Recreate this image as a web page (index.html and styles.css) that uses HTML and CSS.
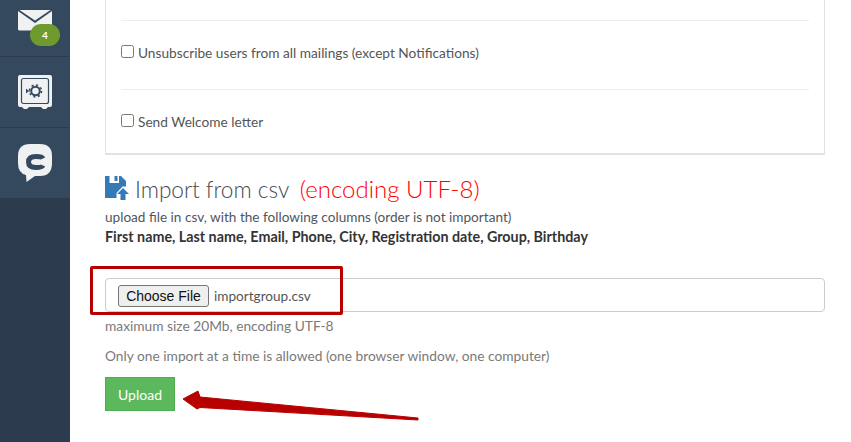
FILE: index.html
```html
<!DOCTYPE html>
<html lang="en">
<head>
    <meta charset="UTF-8">
    <meta name="viewport" content="width=device-width, initial-scale=1.0">
    <title>Import from csv</title>
    <link rel="stylesheet" href="styles.css">
</head>
<body>
    <div class="layout">
        <aside class="sidebar">
            <div class="side-item side-mail">
                <svg class="icon-mail" width="34" height="21" viewBox="0 0 34 21">
                    <path d="M0 1 L17 13 L34 1 V19 Q34 20.500 32.500 20.500 H1.500 Q0 20.500 0 19 Z" fill="#eff1f2"/>
                    <path d="M1.500 0 H32.500 L17 10.500 Z" fill="#eff1f2"/>
                </svg>
                <span class="badge">4</span>
            </div>
            <div class="side-item">
                <svg width="34" height="34" viewBox="0 0 34 34">
                    <path d="M2 0 H32 Q34 0 34 2 V30 Q34 32 32 32 H30 L28 34 H25 L23 32 H11 L9 34 H6 L4 32 H2 Q0 32 0 30 V2 Q0 0 2 0 Z" fill="#eff1f2"/>
                    <rect x="3.500" y="3.500" width="27" height="25" rx="2" fill="none" stroke="#34495e" stroke-width="1.200"/>
                    <circle cx="17.500" cy="16" r="4.300" fill="none" stroke="#34495e" stroke-width="2"/>
                    <circle cx="17.500" cy="16" r="6" fill="none" stroke="#34495e" stroke-width="1.600" stroke-dasharray="2 2.700"/>
                    <path d="M8 13.500 L11 16 L8 18.500 Z M8 15.500 H12 V16.500 H8 Z" fill="#34495e"/>
                </svg>
            </div>
            <div class="side-item">
                <svg width="34" height="38" viewBox="0 0 34 38">
                    <path d="M12 0 H22 Q34 0 34 12 V19 Q34 32 22 32 H17 L8.500 38 L8 31 Q0 29 0 19 V12 Q0 0 12 0 Z" fill="#eff1f2"/>
                    <path d="M25 14.500 Q24 12.500 18 12.500 Q10.500 12.500 10.500 18 Q10.500 23.500 18 23.500 Q24 23.500 25 21.500" fill="none" stroke="#34495e" stroke-width="5"/>
                </svg>
            </div>
        </aside>
        <main class="content">
            <section class="panel">
                <div class="panel-row">
                    <label class="check"><input type="checkbox"> Unsubscribe users from all mailings (except Notifications)</label>
                </div>
                <div class="panel-row">
                    <label class="check"><input type="checkbox"> Send Welcome letter</label>
                </div>
            </section>

            <h2 class="title">
                <svg class="title-icon" width="24" height="24" viewBox="0 0 24 24">
                    <path d="M0 0 H4.500 V7 H14 V0 H16 L21 5 V10.500 H17.500 L11.500 17 V22 H0 Z" fill="#337ab7"/>
                    <rect x="9.500" y="0" width="3" height="5" fill="#337ab7"/>
                    <path d="M18 12 L24 18 H20.500 V24 H15.500 V18 H12 Z" fill="#337ab7"/>
                </svg>
                <span>Import from csv <span class="red">(encoding UTF-8)</span></span>
            </h2>
            <p class="hint">upload file in csv, with the following columns (order is not important)</p>
            <p class="columns">First name, Last name, Email, Phone, City, Registration date, Group, Birthday</p>

            <div class="file-box">
                <span class="file-btn">Choose File</span>
                <span class="file-name">importgroup.csv</span>
            </div>
            <p class="note">maximum size 20Mb, encoding UTF-8</p>
            <p class="note note-second">Only one import at a time is allowed (one browser window, one computer)</p>
            <button class="upload">Upload</button>
        </main>
    </div>

    <div class="mark-box"></div>
    <svg class="mark-arrow" width="250" height="40" viewBox="0 0 250 40">
        <path d="M0 14 L15 6 L17 12 L235 33 L235 35 L17 22.500 L14 24 Z" fill="#b80000" stroke="#b80000" stroke-width="1" stroke-linejoin="round"/>
    </svg>
</body>
</html>
```

FILE: styles.css
```css
html, body {
    margin: 0;
    padding: 0;
    height: 100%;
    overflow: hidden;
    background: #fff;
    font-family: "Lato", "Liberation Sans", sans-serif;
}
.layout {
    display: flex;
    height: 442px;
}
.sidebar {
    width: 70px;
    flex: none;
    background: #2c3b4d;
}
.side-item {
    height: 71px;
    box-sizing: border-box;
    display: flex;
    align-items: center;
    justify-content: center;
    background: #34495e;
    border-bottom: 1px solid #2c3b4d;
}
.side-mail {
    height: 57px;
    position: relative;
    align-items: flex-start;
    padding-top: 10px;
}
.badge {
    position: absolute;
    left: 30px;
    top: 24px;
    width: 30px;
    height: 22px;
    border-radius: 11px;
    background: #6f9a2d;
    color: #fff;
    font-size: 10px;
    font-weight: 700;
    line-height: 22px;
    text-align: center;
}
.content {
    flex: 1;
    padding: 0 26px 0 35px;
    color: #555;
    font-size: 13.700px;
}
.panel {
    border: solid #e2e2e2;
    border-width: 0 1px 2px 1px;
    height: 155px;
    box-sizing: border-box;
    padding: 20px 15px 0;
}
.panel-row {
    height: 69px;
    box-sizing: border-box;
    border-top: 1px solid #eee;
    padding-top: 23px;
}
.check {
    display: flex;
    align-items: center;
    gap: 4px;
    line-height: 18px;
}
.check input {
    margin: 0;
    width: 13px;
    height: 13px;
    position: relative;
    top: -2px;
}
.title {
    margin: 19px 0 0;
    font-size: 22.600px;
    font-weight: 300;
    line-height: 30px;
    color: #3f4a57;
    display: flex;
    align-items: center;
    gap: 6px;
}
.title-icon {
    margin-top: -4px;
}
.red {
    color: #f00;
    margin-left: 5px;
    font-size: 24px;
}
.hint, .columns, .note {
    margin: 0;
    font-size: 13.600px;
    line-height: 20px;
}
.hint {
    margin-top: 2px;
    color: #4f5660;
}
.columns {
    font-size: 14.300px;
    font-weight: 700;
    color: #333;
}
.file-box {
    margin-top: 31px;
    height: 34px;
    box-sizing: border-box;
    border: 1px solid #ccc;
    border-radius: 4px;
    padding: 7px 12px 5px;
    display: flex;
    align-items: center;
    gap: 5px;
}
.file-btn {
    box-sizing: border-box;
    height: 22px;
    width: 91px;
    border: 1px solid #767676;
    border-radius: 3px;
    background: #efefef;
    color: #111;
    font-family: "Liberation Sans", sans-serif;
    font-size: 14px;
    line-height: 20px;
    text-align: center;
}
.file-name {
    font-size: 13.600px;
    color: #555;
}
.note {
    font-size: 13.750px;
    color: #7a7a7a;
    margin-top: 4px;
}
.note-second {
    margin-top: 10px;
}
.upload {
    display: block;
    margin-top: 11px;
    width: 70px;
    height: 34px;
    border: 1px solid #4cae4c;
    border-radius: 0;
    background: #5cb85c;
    color: #fff;
    font-family: inherit;
    font-size: 14px;
    padding: 0;
}
.mark-box {
    position: absolute;
    left: 90px;
    top: 266px;
    width: 253px;
    height: 49px;
    box-sizing: border-box;
    border: 3px solid #b80000;
    border-radius: 2px;
}
.mark-arrow {
    position: absolute;
    left: 183px;
    top: 385px;
}
```
